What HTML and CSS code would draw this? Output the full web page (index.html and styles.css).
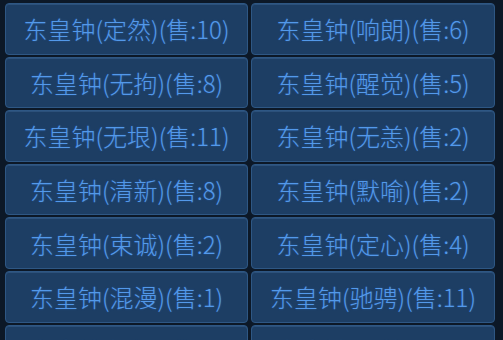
FILE: index.html
```
<!DOCTYPE html>
<html lang="zh-CN">
<head>
    <meta charset="UTF-8">
    <meta name="viewport" content="width=device-width, initial-scale=1.0">
    <title>东皇钟</title>
    <link rel="stylesheet" href="styles.css">
</head>
<body>
    <div class="list">
        <div class="item">东皇钟(定然)(售:10)</div>
        <div class="item">东皇钟(响朗)(售:6)</div>
        <div class="item">东皇钟(无拘)(售:8)</div>
        <div class="item">东皇钟(醒觉)(售:5)</div>
        <div class="item">东皇钟(无垠)(售:11)</div>
        <div class="item">东皇钟(无恙)(售:2)</div>
        <div class="item">东皇钟(清新)(售:8)</div>
        <div class="item">东皇钟(默喻)(售:2)</div>
        <div class="item">东皇钟(束诚)(售:2)</div>
        <div class="item">东皇钟(定心)(售:4)</div>
        <div class="item">东皇钟(混漫)(售:1)</div>
        <div class="item">东皇钟(驰骋)(售:11)</div>
        <div class="item">东皇钟(沉浸)(售:3)</div>
        <div class="item">东皇钟(明静)(售:1)</div>
    </div>
</body>
</html>
```

FILE: styles.css
```
html, body {
    height: 100%;
}
body {
    margin: 0;
    padding: 3px 8px 0 5px;
    background: #0c1827;
    font-family: "Noto Sans CJK SC", "Noto Sans", sans-serif;
    overflow: hidden;
}
.list {
    display: grid;
    grid-template-columns: 243px 244px;
    grid-auto-rows: 51.6px;
    column-gap: 3px;
    row-gap: 2px;
}
.item {
    display: flex;
    align-items: center;
    justify-content: center;
    background: #1d3e64;
    border: 1px solid #2e5784;
    border-radius: 4px;
    box-shadow: inset 0 1px 0 rgba(90, 140, 190, 0.25);
    color: #5399ea;
    font-size: 24px;
    font-weight: 300;
    text-shadow: 0 0 2px rgba(60, 130, 230, 0.45);
    white-space: nowrap;
}
```
